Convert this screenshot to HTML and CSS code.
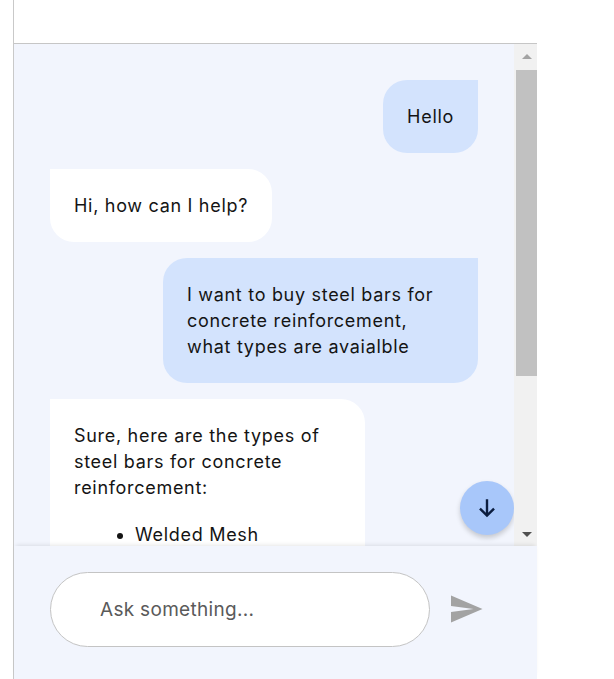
FILE: index.html
```html
<!DOCTYPE html>
<html>
<head>
<meta charset="utf-8">
<link rel="stylesheet" href="styles.css">
</head>
<body>
<div class="app">
  <header class="top"></header>
  <main class="chat">
    <section class="viewport">
      <div class="messages">
        <div class="msg user"><p>Hello</p></div>
        <div class="msg bot"><p>Hi, how can I help?</p></div>
        <div class="msg user"><p>I want to buy steel bars for concrete reinforcement, what types are avaialble</p></div>
        <div class="msg bot">
          <p>Sure, here are the types of steel bars for concrete reinforcement:</p>
          <ul>
            <li>Welded Mesh</li>
          </ul>
        </div>
        <button class="to-bottom" aria-label="Scroll to bottom">
          <svg viewBox="0 0 24 24" width="26" height="26"><path d="M12 4v15M5.5 12.5 12 19l6.5-6.5" fill="none" stroke="#0b1d3f" stroke-width="2.2"/></svg>
        </button>
      </div>
      <div class="scrollbar">
        <div class="arrow up"></div>
        <div class="track"><div class="thumb"></div></div>
        <div class="arrow down"></div>
      </div>
    </section>
    <footer class="composer">
      <div class="input">Ask something...</div>
      <svg class="send" viewBox="0 0 24 24" width="36" height="36"><path d="M2.01 21 23 12 2.01 3 2 10l15 2-15 2z" fill="#a3a3a3"/></svg>
    </footer>
  </main>
</div>
</body>
</html>
```
FILE: styles.css
```css
html, body {
  margin: 0;
  padding: 0;
  background: #fff;
  height: 679px;
  overflow: hidden;
}
body {
  font-family: Inter, "Noto Sans", sans-serif;
  color: #141414;
  letter-spacing: 0.7px;
}
.app {
  margin-left: 13px;
  width: 523px;
  height: 679px;
  border-left: 1px solid #c9c9c9;
  display: flex;
  flex-direction: column;
}
.top {
  height: 43px;
  border-bottom: 1px solid #c6c6c6;
  background: #fff;
  flex: none;
}
.chat {
  flex: 1;
  display: flex;
  flex-direction: column;
  background: #f2f5fd;
}
.viewport {
  height: 502px;
  display: flex;
  flex: none;
}
.messages {
  position: relative;
  flex: 1;
  overflow: hidden;
  padding: 36px 36px 0 36px;
  display: flex;
  flex-direction: column;
  gap: 16px;
}
.msg {
  max-width: 315px;
  box-sizing: border-box;
  padding: 24px 24px 23px;
  font-size: 18px;
  line-height: 26px;
  flex: none;
}
.msg p { margin: 0; }
.msg ul {
  margin: 21px 0 0;
  padding-left: 61px;
}
.user {
  align-self: flex-end;
  background: #d3e3fd;
  border-radius: 24px 0 24px 24px;
}
.bot {
  align-self: flex-start;
  background: #fff;
  border-radius: 0 24px 24px 24px;
}
.to-bottom {
  position: absolute;
  right: 0;
  bottom: 11px;
  width: 54px;
  height: 54px;
  border-radius: 50%;
  border: none;
  background: #a8c7fa;
  box-shadow: 0 3px 5px rgba(0,0,0,0.18);
  display: flex;
  align-items: center;
  justify-content: center;
  padding: 0;
}
.scrollbar {
  width: 23px;
  flex: none;
  background: #f1f1f1;
  display: flex;
  flex-direction: column;
  align-items: flex-end;
}
.arrow {
  height: 24px;
  width: 21px;
  display: flex;
  align-items: center;
  justify-content: center;
  flex: none;
}
.arrow::before {
  content: "";
  width: 0;
  height: 0;
  border-left: 5px solid transparent;
  border-right: 5px solid transparent;
}
.up::before { border-bottom: 5px solid #a3a3a3; }
.down::before { border-top: 5px solid #505050; }
.track {
  flex: 1;
  width: 21px;
}
.thumb {
  height: 306px;
  background: #c1c1c1;
  margin-top: 2px;
}
.composer {
  flex: 1;
  display: flex;
  align-items: flex-start;
  padding: 26px 0 0 36px;
  gap: 18px;
  box-shadow: 0 -3px 4px -2px rgba(0,0,0,0.1);
  position: relative;
}
.input {
  width: 380px;
  height: 75px;
  box-sizing: border-box;
  border: 1px solid #c4c4c4;
  border-radius: 38px;
  background: #fff;
  padding-left: 49px;
  display: flex;
  align-items: center;
  font-size: 19px;
  color: #5a5a5a;
  letter-spacing: 0.3px;
}
.send {
  margin-top: 19px;
}
```
